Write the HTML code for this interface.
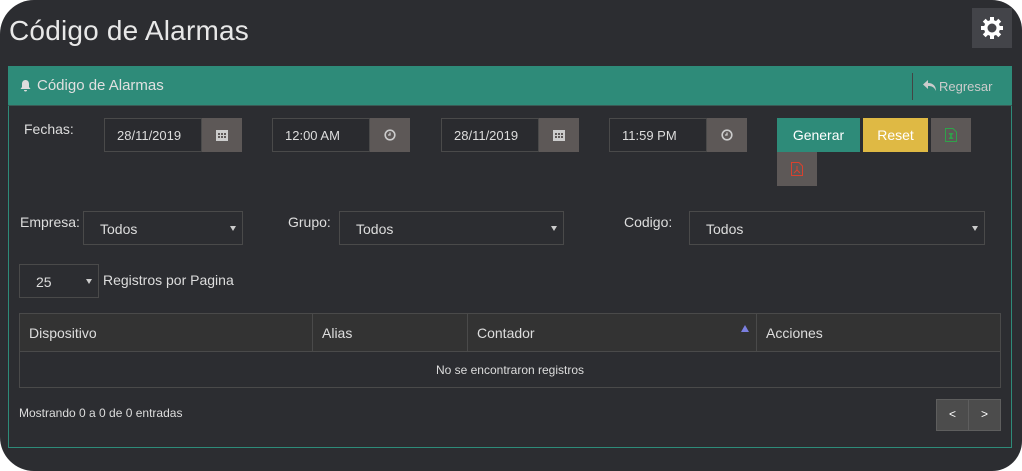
<!DOCTYPE html>
<html><head><meta charset="utf-8"><style>
*{box-sizing:border-box;margin:0;padding:0}
html,body{width:1022px;height:471px;background:#fff;overflow:hidden}
body{font-family:"Liberation Sans","DejaVu Sans",sans-serif;color:#ddd;font-size:13px}
#pg{position:absolute;left:0;top:0;width:1022px;height:471px;background:#2c2d31;border-radius:34px 30px 30px 34px}
.a{position:absolute}
.inp{position:absolute;height:34px;border:1px solid #4a4a4a;background:#2a2b2f;color:#ddd;font-size:13px;padding:9px 12px;white-space:nowrap;overflow:hidden}
.btn{position:absolute;height:34px;background:#5d5857;display:flex;align-items:center;justify-content:center}
.sel{position:absolute;height:34px;border:1px solid #4a4a4a;color:#ddd;font-size:14px;padding:9px 16px}
.sel:after{content:"";position:absolute;right:6px;top:14px;border-left:3px solid transparent;border-right:3px solid transparent;border-top:5px solid #ccc}
.lbl{position:absolute;font-size:14px;color:#ddd}
th,td{border:1px solid #4a4a4a}
</style></head><body><div id="pg">
<div class="a" style="left:9px;top:15px;font-size:28px;color:#e8e8e8;font-weight:300;letter-spacing:0.2px">Código de Alarmas</div>
<div class="a" style="left:972px;top:8px;width:40px;height:40px;background:#434449;display:flex;align-items:center;justify-content:center">
<svg width="24" height="24" viewBox="0 0 24 24"><g fill="#fff"><circle cx="12" cy="12" r="8"/><rect x="10" y="1" width="4" height="22"/><rect x="1" y="10" width="22" height="4"/><rect x="10" y="1" width="4" height="22" transform="rotate(45 12 12)"/><rect x="10" y="1" width="4" height="22" transform="rotate(-45 12 12)"/></g><circle cx="12" cy="12" r="4.5" fill="#434449"/></svg></div>
<div class="a" style="left:8px;top:66px;width:1004px;height:382px;border:1px solid #2e8b79"></div>
<div class="a" style="left:8px;top:66px;width:1004px;height:40px;background:#2e8b79;border-bottom:1px solid #3a5a55"></div>
<svg class="a" style="left:19px;top:79px" width="13" height="13" viewBox="0 0 13 13"><path d="M6.5 1C4 1 3 3 3 5v3L1.5 10h10L10 8V5C10 3 9 1 6.5 1zM5 11h3a1.5 1.5 0 0 1-3 0z" fill="#ddd"/></svg>
<div class="a" style="left:37px;top:77px;font-size:15px;color:#e0e0e0">Código de Alarmas</div>
<div class="a" style="left:912px;top:73px;width:1px;height:27px;background:#444"></div>
<svg class="a" style="left:923px;top:80px" width="13" height="11" viewBox="0 0 13 11"><path d="M5 0L0 4.5 5 9V6c4 0 6 1 8 5 0-5-3-8-8-8z" fill="#ccc"/></svg>
<div class="a" style="left:939px;top:79px;font-size:13px;color:#ccc">Regresar</div>

<div class="lbl" style="left:24px;top:121px">Fechas:</div>
<div class="inp" style="left:104px;top:118px;width:98px">28/11/2019</div>
<div class="btn" style="left:202px;top:118px;width:40px"><svg width="12" height="12"><rect x="0" y="1" width="12" height="11" fill="#ccc"/><g fill="#5d5857"><rect x="2" y="4" width="2" height="2"/><rect x="5" y="4" width="2" height="2"/><rect x="8" y="4" width="2" height="2"/><rect x="2" y="7" width="2" height="2"/><rect x="5" y="7" width="2" height="2"/><rect x="8" y="7" width="2" height="2"/></g></svg></div>
<div class="inp" style="left:272px;top:118px;width:98px">12:00 AM</div>
<div class="btn" style="left:370px;top:118px;width:40px"><svg width="12" height="12"><circle cx="6" cy="6" r="4.8" fill="none" stroke="#ccc" stroke-width="1.6"/><path d="M6 3.5V6H4" stroke="#ccc" fill="none" stroke-width="1.3"/></svg></div>
<div class="inp" style="left:441px;top:118px;width:98px">28/11/2019</div>
<div class="btn" style="left:539px;top:118px;width:40px"><svg width="12" height="12"><rect x="0" y="1" width="12" height="11" fill="#ccc"/><g fill="#5d5857"><rect x="2" y="4" width="2" height="2"/><rect x="5" y="4" width="2" height="2"/><rect x="8" y="4" width="2" height="2"/><rect x="2" y="7" width="2" height="2"/><rect x="5" y="7" width="2" height="2"/><rect x="8" y="7" width="2" height="2"/></g></svg></div>
<div class="inp" style="left:609px;top:118px;width:98px">11:59 PM</div>
<div class="btn" style="left:707px;top:118px;width:40px"><svg width="12" height="12"><circle cx="6" cy="6" r="4.8" fill="none" stroke="#ccc" stroke-width="1.6"/><path d="M6 3.5V6H4" stroke="#ccc" fill="none" stroke-width="1.3"/></svg></div>
<div class="btn" style="left:777px;top:118px;width:83px;background:#2e8b79;color:#fff;font-size:14px">Generar</div>
<div class="btn" style="left:863px;top:118px;width:65px;background:#dfb944;color:#fff;font-size:14px">Reset</div>
<div class="btn" style="left:931px;top:118px;width:40px"><svg width="12" height="14"><path d="M0.5 0.5H8L11.5 4V13.5H0.5z" fill="none" stroke="#2fa24a"/><path d="M3.5 5h5l-2 3 2 3h-5l2-3z" fill="#2fa24a"/></svg></div>
<div class="btn" style="left:777px;top:152px;width:40px"><svg width="12" height="14"><path d="M0.5 0.5H8L11.5 4V13.5H0.5z" fill="none" stroke="#d9412e"/><path d="M6 4v4L3 11M6 8l3 3" stroke="#d9412e" fill="none"/></svg></div>

<div class="lbl" style="left:20px;top:214px">Empresa:</div>
<div class="sel" style="left:83px;top:211px;width:160px">Todos</div>
<div class="lbl" style="left:288px;top:214px">Grupo:</div>
<div class="sel" style="left:339px;top:211px;width:225px">Todos</div>
<div class="lbl" style="left:624px;top:214px">Codigo:</div>
<div class="sel" style="left:689px;top:211px;width:296px">Todos</div>
<div class="sel" style="left:19px;top:264px;width:80px">25</div>
<div class="lbl" style="left:103px;top:272px">Registros por Pagina</div>

<table class="a" style="left:19px;top:313px;width:982px;border-collapse:collapse;font-size:14px">
<tr style="height:38px;background:#333;text-align:left"><th style="width:293px;padding-left:9px;font-weight:normal">Dispositivo</th><th style="width:155px;padding-left:9px;font-weight:normal">Alias</th><th style="width:289px;padding-left:9px;font-weight:normal;position:relative">Contador<span style="position:absolute;right:7px;top:11px;border-left:4px solid transparent;border-right:4px solid transparent;border-bottom:7px solid #7b7fe0"></span></th><th style="padding-left:9px;font-weight:normal">Acciones</th></tr>
<tr style="height:36px"><td colspan="4" style="text-align:center;font-size:12px">No se encontraron registros</td></tr>
</table>
<div class="a" style="left:19px;top:406px;font-size:12px">Mostrando 0 a 0 de 0 entradas</div>
<div class="a" style="left:936px;top:399px;width:33px;height:32px;background:#4c4c4c;border:1px solid #5e5e5e;color:#fff;text-align:center;line-height:29px;font-size:12px">&lt;</div>
<div class="a" style="left:968px;top:399px;width:33px;height:32px;background:#4c4c4c;border:1px solid #5e5e5e;color:#fff;text-align:center;line-height:29px;font-size:12px">&gt;</div>
</div></body></html>
